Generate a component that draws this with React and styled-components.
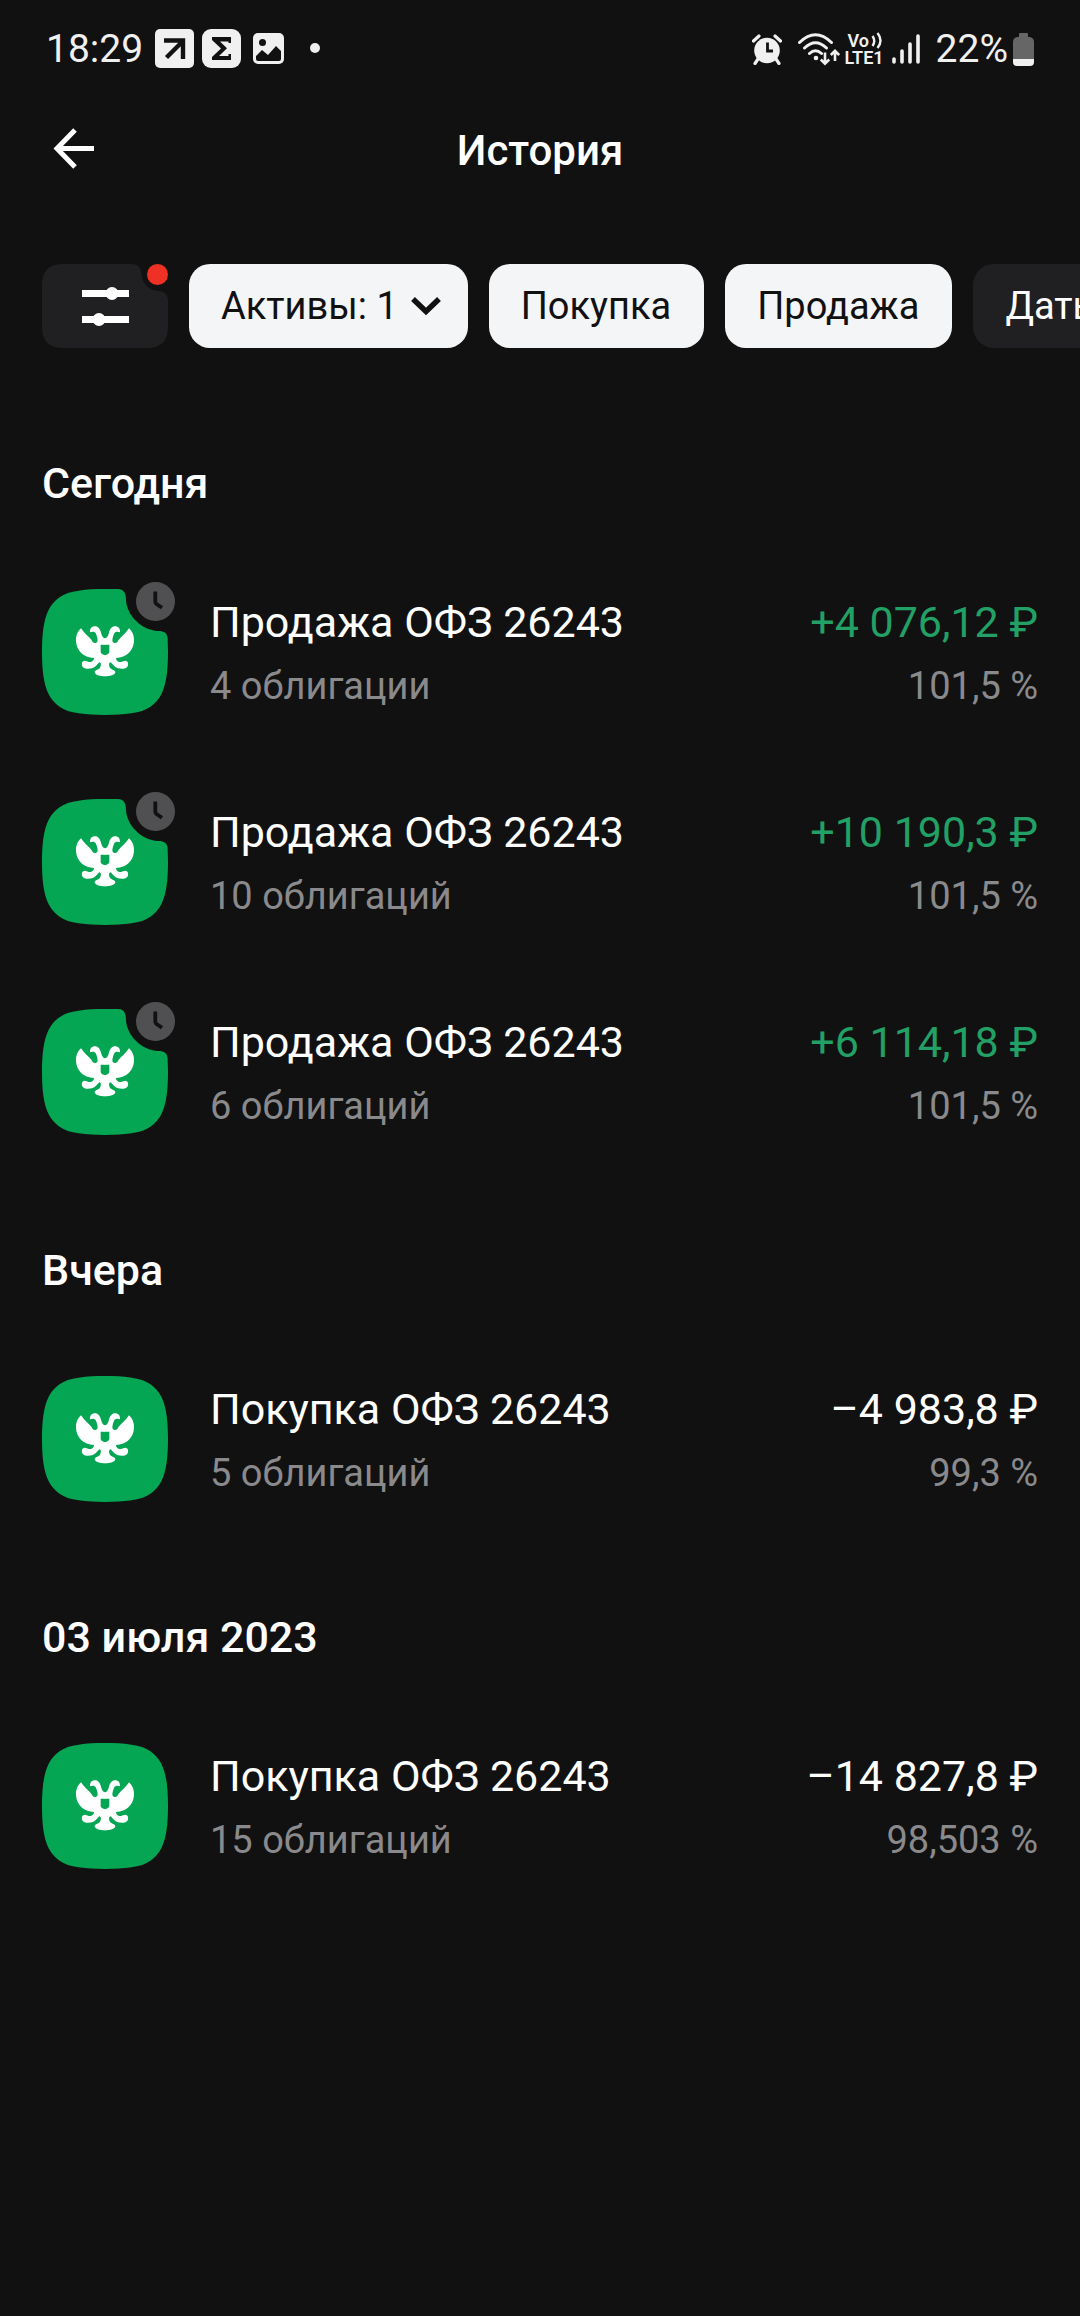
import * as React from "react"
import styled, { createGlobalStyle } from "styled-components"

const GlobalStyle = createGlobalStyle`
  * {
    box-sizing: border-box;
  }

  body {
    margin: 0;
    background: #111111;
    color: #ffffff;
    font-family: Roboto, "Noto Sans", sans-serif;
    font-size: 43px;
    line-height: 48px;
    overflow-x: hidden;
  }
`

const Screen = styled.div`
  min-height: 100vh;
`

const StatusBar = styled.div`
  display: flex;
  align-items: center;
  justify-content: space-between;
  height: 98px;
  padding: 0 46px;
  color: #f0f0f0;
  font-size: 39px;
`

const StatusGroup = styled.div`
  display: flex;
  align-items: center;
  gap: ${(p) => p.$gap};
`

const Volte = styled.span`
  display: flex;
  flex-direction: column;
  font-size: 18px;
  font-weight: 600;
  line-height: 17px;
`

const VolteTop = styled.span`
  display: flex;
  gap: 2px;
  padding-left: 3px;
`

const Header = styled.header`
  display: grid;
  grid-template-columns: 63px 1fr 63px;
  align-items: center;
  height: 106px;
  padding: 0 42px;
`

const BackButton = styled.button`
  display: flex;
  justify-content: center;
  padding: 0;
  border: 0;
  background: none;
  color: #ffffff;
`

const Title = styled.h1`
  margin: 0;
  font-size: 42px;
  font-weight: 500;
  text-align: center;
`

const Filters = styled.nav`
  display: flex;
  gap: 21px;
  margin-top: 60px;
  padding: 0 0 42px 42px;
  overflow: hidden;
`

const FilterButton = styled.button`
  position: relative;
  flex: none;
  width: 126px;
  height: 84px;
  padding: 0;
  border: 0;
  background: none;

  svg {
    display: block;
  }
`

const Dot = styled.span`
  position: absolute;
  top: 0;
  right: 0;
  width: 21px;
  height: 21px;
  border-radius: 50%;
  background: #ee3124;
`

const Chip = styled.button`
  display: flex;
  flex: none;
  align-items: center;
  gap: 12px;
  height: 84px;
  padding: 0 ${(p) => (p.$menu ? "26px" : "33px")} 0 32px;
  border: 0;
  border-radius: 21px;
  background: ${(p) => (p.$active ? "#f4f5f7" : "#202022")};
  color: ${(p) => (p.$active ? "#111111" : "#ffffff")};
  font-family: inherit;
  font-size: 38px;
  line-height: 44px;
  white-space: nowrap;
`

const GroupTitle = styled.h2`
  margin: 0;
  padding: 69px 42px 40px;
  font-size: 43px;
  font-weight: 500;
`

const List = styled.ul`
  margin: 0;
  padding: 0;
  list-style: none;
`

const Row = styled.li`
  display: flex;
  align-items: center;
  gap: 42px;
  padding: 42px;
`

const Logo = styled.div`
  position: relative;
  flex: none;
  width: 126px;
  height: 126px;
`

const Pending = styled.svg`
  position: absolute;
  top: -7px;
  right: -7px;
`

const Lines = styled.div`
  display: flex;
  flex: ${(p) => (p.$end ? "none" : "1")};
  flex-direction: column;
  gap: 18px;
  padding-top: 2px;
  text-align: ${(p) => (p.$end ? "right" : "left")};
  white-space: nowrap;
`

const Primary = styled.span`
  color: ${(p) => (p.$income ? "#22a065" : "#ffffff")};
`

const Secondary = styled.span`
  color: #8a8a8c;
  font-size: 38px;
  line-height: 44px;
`

const groups = [
  {
    title: "Сегодня",
    items: [
      { name: "Продажа ОФЗ 26243", count: "4 облигации", sum: "+4 076,12 ₽", price: "101,5 %", income: true },
      { name: "Продажа ОФЗ 26243", count: "10 облигаций", sum: "+10 190,3 ₽", price: "101,5 %", income: true },
      { name: "Продажа ОФЗ 26243", count: "6 облигаций", sum: "+6 114,18 ₽", price: "101,5 %", income: true },
    ],
  },
  {
    title: "Вчера",
    items: [{ name: "Покупка ОФЗ 26243", count: "5 облигаций", sum: "–4 983,8 ₽", price: "99,3 %" }],
  },
  {
    title: "03 июля 2023",
    items: [{ name: "Покупка ОФЗ 26243", count: "15 облигаций", sum: "–14 827,8 ₽", price: "98,503 %" }],
  },
]

const tileCut =
  "M0 189C0 133 5 93 20 62C35 33 62 10 110 5C135 1 160 0 189 0H228C245 0 252 12 252 33C254 80 300 124 348 126C367 126 376 132 377 150L378 189C378 245 373 285 358 316C343 345 316 368 268 373C243 377 218 378 189 378C160 378 135 377 110 373C62 368 35 345 20 316C5 285 0 245 0 189Z"
const tileFull =
  "M0 189C0 133 5 93 20 62C35 33 62 10 110 5C135 1 160 0 189 0C218 0 243 1 268 5C316 10 343 33 358 62C373 93 378 133 378 189C378 245 373 285 358 316C343 345 316 368 268 373C243 377 218 378 189 378C160 378 135 377 110 373C62 368 35 345 20 316C5 285 0 245 0 189Z"
// left half of the eagle, the right one is its mirror
const wing =
  "M190 148C183 147 180 141 178 134C174 118 168 112 159 112C149 112 143 119 144 130C148 129 154 127 158 130C163 134 164 140 166 147C168 156 167 161 160 162C153 162 151 158 148 152C140 143 127 133 117 118C107 127 101 140 102 157C104 185 124 206 156 207C156 213 152 218 146 219C138 219 134 215 127 215C118 217 118 228 123 235C130 241 142 240 150 238C160 235 165 227 172 220C178 221 178 230 173 238C168 243 158 243 158 250C159 258 174 262 190 262V199C182 197 176 193 176 188V167H190Z"

function BondLogo({ pending }) {
  return (
    <Logo>
      <svg width="126" height="126" viewBox="0 0 378 378" aria-hidden="true">
        <path fill="#04a653" d={pending ? tileCut : tileFull} />
        <path fill="#ffffff" d={wing} />
        <path fill="#ffffff" d={wing} transform="matrix(-1 0 0 1 378 0)" />
      </svg>
      {pending ? (
        <Pending width="39" height="39" viewBox="0 0 39 39" aria-hidden="true">
          <circle cx="19.5" cy="19.5" r="19.5" fill="#505052" />
          <path d="M19.3 9.5V19.5Q19.3 21 20.5 22L26 25.8" fill="none" stroke="#111111" strokeWidth="3.8" />
        </Pending>
      ) : null}
    </Logo>
  )
}

function NotificationIcons() {
  return (
    <svg width="166" height="40" viewBox="0 0 166 40" fill="#f0f0f0" aria-hidden="true">
      <rect width="39" height="39" rx="5" />
      <path d="M9 11.5H28V30M27 13L11.5 28.5" fill="none" stroke="#111111" strokeWidth="4.4" />
      <rect x="47" width="39" height="39" rx="9" />
      <path d="M57 8H76V14H73.5V12.5H65L72 19.3L64 27H73.5V25H76V31H57V28L66 19.5L57 11Z" fill="#111111" />
      <rect x="98" y="4" width="31" height="31" rx="5" />
      <circle cx="107.5" cy="13.5" r="3.5" fill="#111111" />
      <path d="M101 27L107 21L113 26L121 17L126 22V30Q126 32 124 32H103Q101 32 101 30Z" fill="#111111" />
      <circle cx="160" cy="19" r="5" />
    </svg>
  )
}

function AlarmIcon() {
  return (
    <svg width="30" height="31" viewBox="0 0 30 31" fill="none" aria-hidden="true">
      <circle cx="15" cy="16.5" r="12.8" fill="#f0f0f0" />
      <path d="M1.5 7L7 2M28.5 7L23 2M6 25L3 29.5M24 25L27 29.5" stroke="#f0f0f0" strokeWidth="3.2" strokeLinecap="round" />
      <path d="M15.5 8.5V17H21" stroke="#111111" strokeWidth="2.8" />
    </svg>
  )
}

function WifiIcon() {
  return (
    <svg width="42" height="33" viewBox="0 0 42 33" fill="none" stroke="#f0f0f0" strokeWidth="3" aria-hidden="true">
      <path d="M1.5 9.5Q17.5 -6 33.5 9.5M6.5 15Q17.5 4.5 28.5 15M11.5 20.5Q17.5 15 23.5 20.5" strokeLinecap="round" />
      <circle cx="18" cy="25" r="2.3" fill="#f0f0f0" stroke="none" />
      <path d="M27 19.5V30.5M22.8 26.5L27 30.7L31.2 26.5M37 28V18M32.8 22L37 17.8L41.2 22" strokeWidth="2.6" />
    </svg>
  )
}

function VolteWaves() {
  return (
    <svg width="12" height="17" viewBox="0 0 12 17" fill="none" stroke="#f0f0f0" strokeWidth="2.4" aria-hidden="true">
      <path d="M1.5 4Q5 9 1.5 14M6.5 1Q12.5 8.5 6.5 16" />
    </svg>
  )
}

function SignalIcon() {
  return (
    <svg width="28" height="30" viewBox="0 0 28 30" fill="none" stroke="#f0f0f0" strokeWidth="3.6" strokeLinecap="round" aria-hidden="true">
      <path d="M2 25V28M10 17V28M18 10V28M26 2V28" />
    </svg>
  )
}

function BatteryIcon() {
  return (
    <svg width="21" height="33" viewBox="0 0 21 33" aria-hidden="true">
      <path d="M6 1Q6 0 7 0H14Q15 0 15 1V4H17Q21 5 21 9V26H0V9Q0 5 4 4H6Z" fill="#666666" />
      <path d="M0 26H21V29Q21 33 17 33H4Q0 33 0 29Z" fill="#f0f0f0" />
    </svg>
  )
}

export default function App() {
  return (
    <>
      <GlobalStyle />
      <Screen>
        <StatusBar>
          <StatusGroup $gap="12px">
            <span>18:29</span>
            <NotificationIcons />
          </StatusGroup>
          <StatusGroup $gap="16px">
            <AlarmIcon />
            <StatusGroup $gap="8px">
              <StatusGroup $gap="4px">
                <WifiIcon />
                <Volte>
                  <VolteTop>
                    Vo
                    <VolteWaves />
                  </VolteTop>
                  <span>LTE1</span>
                </Volte>
              </StatusGroup>
              <SignalIcon />
            </StatusGroup>
            <StatusGroup $gap="5px">
              <span>22%</span>
              <BatteryIcon />
            </StatusGroup>
          </StatusGroup>
        </StatusBar>

        <Header>
          <BackButton aria-label="Назад">
            <svg width="42" height="46" viewBox="0 0 42 46" fill="none" stroke="#ffffff" strokeWidth="5" aria-hidden="true">
              <path d="M41 20.5H4M22 2L4 20.5L22 39" />
            </svg>
          </BackButton>
          <Title>История</Title>
        </Header>

        <Filters>
          <FilterButton aria-label="Фильтры">
            <svg width="126" height="84" viewBox="0 0 126 84" fill="#ffffff" aria-hidden="true">
              <path
                d="M21 0H90C96 0 99 4 99.5 10C100 19 107 26.5 116 27C122 27.5 126 30 126 36V63Q126 84 105 84H21Q0 84 0 63V21Q0 0 21 0Z"
                fill="#202022"
              />
              <path d="M40 26H87V33H40ZM40 52H87V59H40Z" />
              <circle cx="70" cy="29.5" r="6.5" />
              <circle cx="57" cy="55.5" r="6.5" />
            </svg>
            <Dot />
          </FilterButton>
          <Chip $active $menu>
            Активы: 1
            <svg width="32" height="20" viewBox="0 0 32 20" fill="none" stroke="#111111" strokeWidth="5.5" aria-hidden="true">
              <path d="M3 3L16 15.5L29 3" />
            </svg>
          </Chip>
          <Chip $active>Покупка</Chip>
          <Chip $active>Продажа</Chip>
          <Chip>Даты</Chip>
        </Filters>

        <main>
          {groups.map((group) => (
            <section key={group.title}>
              <GroupTitle>{group.title}</GroupTitle>
              <List>
                {group.items.map((item) => (
                  <Row key={item.sum}>
                    <BondLogo pending={item.income} />
                    <Lines>
                      <Primary>{item.name}</Primary>
                      <Secondary>{item.count}</Secondary>
                    </Lines>
                    <Lines $end>
                      <Primary $income={item.income}>{item.sum}</Primary>
                      <Secondary>{item.price}</Secondary>
                    </Lines>
                  </Row>
                ))}
              </List>
            </section>
          ))}
        </main>
      </Screen>
    </>
  )
}
